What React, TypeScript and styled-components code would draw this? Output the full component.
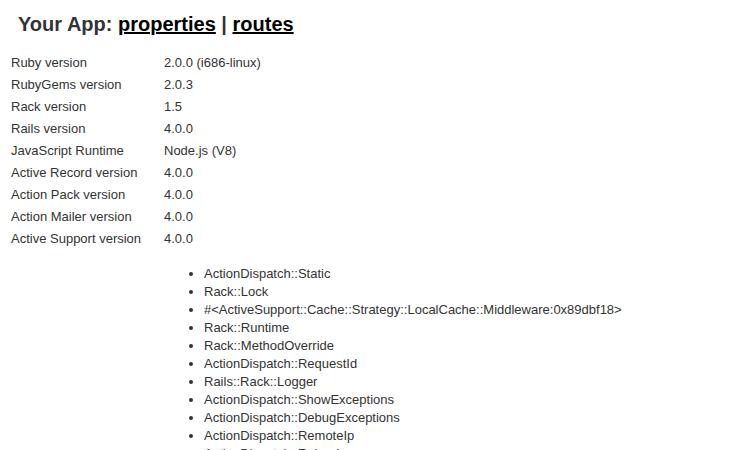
import React from "react";
import styled, { createGlobalStyle } from "styled-components";

const properties: [string, string][] = [
  ["Ruby version", "2.0.0 (i686-linux)"],
  ["RubyGems version", "2.0.3"],
  ["Rack version", "1.5"],
  ["Rails version", "4.0.0"],
  ["JavaScript Runtime", "Node.js (V8)"],
  ["Active Record version", "4.0.0"],
  ["Action Pack version", "4.0.0"],
  ["Action Mailer version", "4.0.0"],
  ["Active Support version", "4.0.0"],
];

const middleware = [
  "ActionDispatch::Static",
  "Rack::Lock",
  "#<ActiveSupport::Cache::Strategy::LocalCache::Middleware:0x89dbf18>",
  "Rack::Runtime",
  "Rack::MethodOverride",
  "ActionDispatch::RequestId",
  "Rails::Rack::Logger",
  "ActionDispatch::ShowExceptions",
  "ActionDispatch::DebugExceptions",
  "ActionDispatch::RemoteIp",
  "ActionDispatch::Reloader",
  "ActionDispatch::Callbacks",
  "ActiveRecord::Migration::CheckPending",
  "ActiveRecord::ConnectionAdapters::ConnectionManagement",
  "ActiveRecord::QueryCache",
  "ActionDispatch::Cookies",
  "ActionDispatch::Session::CookieStore",
  "ActionDispatch::Flash",
  "ActionDispatch::ParamsParser",
  "Rack::Head",
  "Rack::ConditionalGet",
  "Rack::ETag",
];

const GlobalStyle = createGlobalStyle`
  body {
    margin: 8px;
    background: #fff;
    color: #333;
    font-family: "Liberation Sans", Arial, sans-serif;
    font-size: 13px;
    line-height: 18px;
  }
`;

const App: React.FC = () => {
  return (
    <>
      <GlobalStyle />
      <Heading>
        Your App: <HeadLink href="#properties">properties</HeadLink> |{" "}
        <HeadLink href="#routes">routes</HeadLink>
      </Heading>
      <PropsTable>
        <tbody>
          {properties.map(([key, value]) => (
            <tr key={key}>
              <KeyCell>{key}</KeyCell>
              <ValueCell>{value}</ValueCell>
            </tr>
          ))}
          <tr>
            <KeyCell>Middleware</KeyCell>
            <ValueCell>
              <MiddlewareList>
                {middleware.map((item) => (
                  <li key={item}>{item}</li>
                ))}
              </MiddlewareList>
            </ValueCell>
          </tr>
        </tbody>
      </PropsTable>
    </>
  );
};

const Heading = styled.h2`
  margin: 4px 0 16px;
  padding-left: 10px;
  font-size: 20px;
  line-height: 24px;
  font-weight: bold;
  color: #333;
`;

const HeadLink = styled.a`
  color: #000;
  text-decoration: underline;
`;

const PropsTable = styled.table`
  border-collapse: collapse;
  margin: 0;
`;

const KeyCell = styled.td`
  width: 150px;
  padding: 2px 3px;
  vertical-align: middle;
`;

const ValueCell = styled.td`
  padding: 2px 3px 2px 0;
  vertical-align: middle;
`;

const MiddlewareList = styled.ul`
  margin: 13px 0 0;
  padding-left: 40px;
  list-style: disc;
  line-height: 18px;
`;

export default App;
